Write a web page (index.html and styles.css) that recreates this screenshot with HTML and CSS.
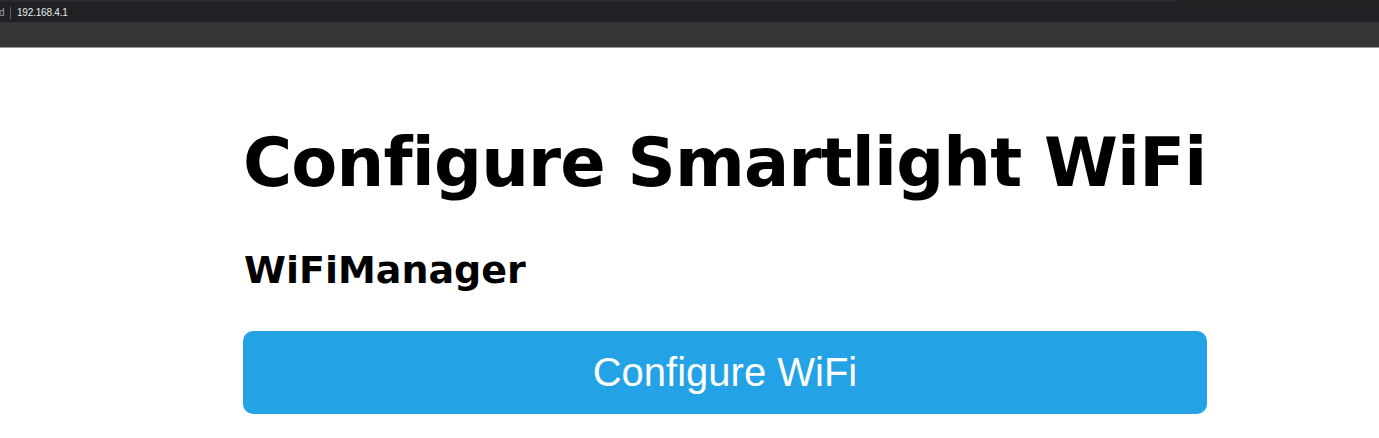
FILE: index.html
```html
<!DOCTYPE html>
<html>
<head>
<meta charset="utf-8">
<link rel="stylesheet" href="styles.css">
</head>
<body>
<div class="chrome">
  <div class="tabline"><div class="tabline-left"></div><div class="tabline-right"></div></div>
  <div class="addressbar">
    <span class="addr-prefix">d</span>
    <span class="addr-sep"></span>
    <span class="addr-url">192.168.4.1</span>
  </div>
  <div class="toolbar"></div>
  <div class="edge"></div>
</div>
<main class="page">
  <div class="container">
    <h1 class="title">Configure Smartlight WiFi</h1>
    <h3 class="subtitle">WiFiManager</h3>
    <button class="btn">Configure WiFi</button>
  </div>
</main>
</body>
</html>
```
FILE: styles.css
```css
html, body {
  margin: 0;
  padding: 0;
  background: #ffffff;
  overflow: hidden;
}
body {
  width: 1379px;
  height: 438px;
}
.chrome {
  display: flex;
  flex-direction: column;
}
.tabline {
  height: 3px;
  display: flex;
  background: #202124;
}
.tabline-left {
  width: 1177px;
  background: #2c2c2c;
  border-bottom: 1px solid #202124;
}
.tabline-right {
  flex: 1;
  background: #1f1f1f;
}
.addressbar {
  height: 19px;
  background: #202124;
  display: flex;
  align-items: center;
  font-family: "Liberation Sans", Arial, sans-serif;
  font-size: 10px;
  color: #e8eaed;
}
.addr-prefix {
  color: #9aa0a6;
  margin-left: -1px;
  width: 11px;
}
.addr-sep {
  width: 1px;
  height: 12px;
  background: #5f6368;
  margin-right: 6px;
}
.addr-url {
  letter-spacing: -0.2px;
}
.toolbar {
  height: 25px;
  background: #353535;
}
.edge {
  height: 1px;
  background: #9c9c9c;
}
.page {
  display: flex;
  padding-left: 243px;
}
.container {
  width: 964px;
  display: flex;
  flex-direction: column;
}
.title {
  font-family: "DejaVu Sans", Verdana, sans-serif;
  font-weight: bold;
  font-size: 67px;
  line-height: 1;
  margin: 82px 0 0 0;
  color: #000;
  letter-spacing: -0.8px;
  white-space: nowrap;
}
.subtitle {
  font-family: "DejaVu Sans", Verdana, sans-serif;
  font-weight: bold;
  font-size: 38px;
  line-height: 1;
  margin: 54px 0 0 1px;
  color: #000;
}
.btn {
  margin-top: 42px;
  height: 83px;
  width: 964px;
  border: 0;
  border-radius: 10px;
  background: #24a2e6;
  color: #ffffff;
  font-family: "Liberation Sans", Arial, Helvetica, sans-serif;
  font-size: 40px;
  padding: 0;
}
```
